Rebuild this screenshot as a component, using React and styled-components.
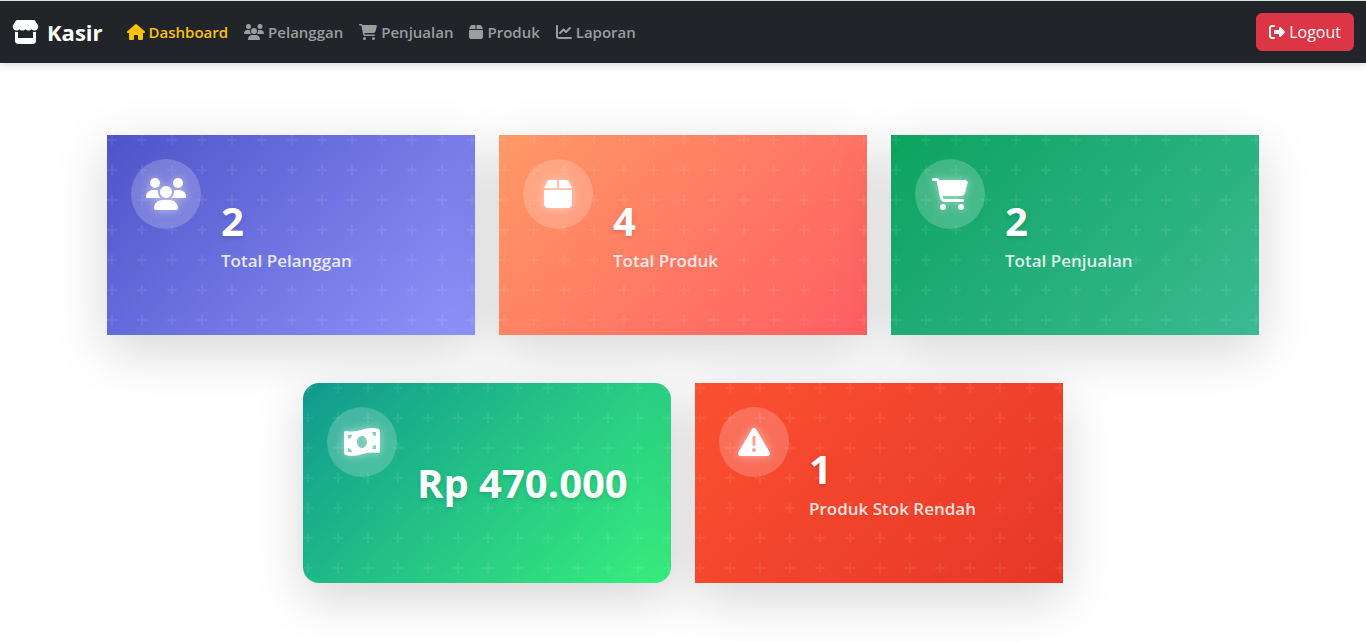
import React from "react";
import styled, { createGlobalStyle, css } from "styled-components";
import {
  FaBox,
  FaCartShopping,
  FaChartLine,
  FaHouse,
  FaMoneyBillWave,
  FaRightFromBracket,
  FaStore,
  FaTriangleExclamation,
  FaUsers
} from "react-icons/fa6";

const GlobalStyle = createGlobalStyle`
  *, *::before, *::after {
    box-sizing: border-box;
  }
  body {
    margin: 0;
    background: #fff;
    color: #212529;
    font-family: "Segoe UI", "Open Sans", "Noto Sans", sans-serif;
    font-size: 16px;
    line-height: 24px;
  }
`;

// units: glyph width in sixteenths of its height
const Glyph = styled.span`
  display: flex;
  font-size: ${props => props.$size || 16}px;
  svg {
    width: calc(1em * ${props => props.$units || 16} / 16);
    height: 1em;
  }
`;

const Navbar = styled.nav`
  display: flex;
  align-items: center;
  padding: 12px;
  border-top: 1px solid #d7e8d5;
  background: #212529;
  box-shadow: 0 2px 8px rgba(0, 0, 0, 0.15);
`;

const Brand = styled.a`
  display: flex;
  align-items: center;
  gap: 8px;
  margin-right: 16px;
  color: #fff;
  font-size: 22px;
  font-weight: 700;
  text-decoration: none;
`;

const Menu = styled.ul`
  display: flex;
  flex-grow: 1;
  margin: 0;
  padding: 0;
  list-style: none;
`;

const MenuLink = styled.a`
  display: flex;
  align-items: center;
  gap: 4px;
  padding: 6px 8px;
  color: ${props => (props.$active ? "#ffc107" : "#9b9d9e")};
  font-size: 15px;
  font-weight: 600;
  text-decoration: none;
`;

const Logout = styled.button`
  display: flex;
  align-items: center;
  gap: 4px;
  padding: 6px 12px;
  border: 1px solid #dc3545;
  border-radius: 6px;
  background: #dc3545;
  color: #fff;
  font: inherit;
  cursor: pointer;
`;

const Cards = styled.main`
  display: flex;
  flex-wrap: wrap;
  justify-content: center;
  gap: 48px 24px;
  max-width: 1176px;
  margin: 0 auto;
  padding: 72px 12px;
`;

const plus = encodeURIComponent(
  '<svg xmlns="http://www.w3.org/2000/svg" width="30" height="30"><path fill="#fff" fill-opacity=".07" d="M6 4V0H4v4H0v2h4v4h2V6h4V4z"/></svg>'
);

const CardBox = styled.section`
  display: flex;
  flex: 0 1 368px;
  min-height: 200px;
  padding: 24px;
  border-radius: ${props => (props.$rounded ? "16px" : "0")};
  background: url("data:image/svg+xml,${plus}"),
    linear-gradient(135deg, ${props => props.$from}, ${props => props.$to});
  box-shadow: 0 15px 50px rgba(0, 0, 0, 0.17);
  color: #fff;
`;

const IconCircle = styled.div`
  display: grid;
  place-content: center;
  flex: none;
  width: 70px;
  height: 70px;
  margin-right: 20px;
  border-radius: 50%;
  background: rgba(255, 255, 255, 0.2);
  svg {
    filter: drop-shadow(0 0 5px rgba(255, 255, 255, 0.5));
  }
`;

const Info = styled.div`
  align-self: center;
`;

const Value = styled.h2`
  margin: 0;
  font-size: 40px;
  font-weight: 700;
  line-height: 48px;
  white-space: nowrap;
  text-shadow: 0 2px 4px rgba(0, 0, 0, 0.15);
  ${props =>
    props.$hasLabel &&
    css`
      padding-top: 4px;
    `}
`;

const Label = styled.p`
  margin: 0;
  color: rgba(255, 255, 255, 0.85);
  font-size: 17px;
  font-weight: 600;
  line-height: 32px;
`;

const menu = [
  { text: "Dashboard", icon: FaHouse, units: 18, active: true },
  { text: "Pelanggan", icon: FaUsers, units: 20 },
  { text: "Penjualan", icon: FaCartShopping, units: 18 },
  { text: "Produk", icon: FaBox, units: 14 },
  { text: "Laporan", icon: FaChartLine }
];

const cards = [
  { icon: FaUsers, units: 20, value: "2", label: "Total Pelanggan", from: "#4e54c8", to: "#8f94fb" },
  { icon: FaBox, units: 14, value: "4", label: "Total Produk", from: "#ff9966", to: "#ff5e62" },
  { icon: FaCartShopping, units: 18, value: "2", label: "Total Penjualan", from: "#0ba360", to: "#3cba92" },
  { icon: FaMoneyBillWave, units: 18, value: "Rp 470.000", from: "#11998e", to: "#38ef7d", rounded: true },
  { icon: FaTriangleExclamation, value: "1", label: "Produk Stok Rendah", from: "#fc5032", to: "#e63726" }
];

const Card = ({ icon: Icon, units, value, label, from, to, rounded }) => (
  <CardBox $from={from} $to={to} $rounded={rounded}>
    <IconCircle>
      <Glyph $units={units} $size={32}>
        <Icon />
      </Glyph>
    </IconCircle>
    <Info>
      <Value $hasLabel={!!label}>{value}</Value>
      {label ? <Label>{label}</Label> : null}
    </Info>
  </CardBox>
);

const App = () => {
  return (
    <>
      <GlobalStyle />
      <Navbar>
        <Brand href="#">
          <Glyph $units={18} $size={24}>
            <FaStore />
          </Glyph>
          Kasir
        </Brand>
        <Menu>
          {menu.map(({ text, icon: Icon, units, active }) => (
            <li key={text}>
              <MenuLink href="#" $active={active}>
                <Glyph $units={units}>
                  <Icon />
                </Glyph>
                {text}
              </MenuLink>
            </li>
          ))}
        </Menu>
        <Logout type="button">
          <Glyph>
            <FaRightFromBracket />
          </Glyph>
          Logout
        </Logout>
      </Navbar>
      <Cards>
        {cards.map(card => (
          <Card key={card.from} {...card} />
        ))}
      </Cards>
    </>
  );
};

export default App;
